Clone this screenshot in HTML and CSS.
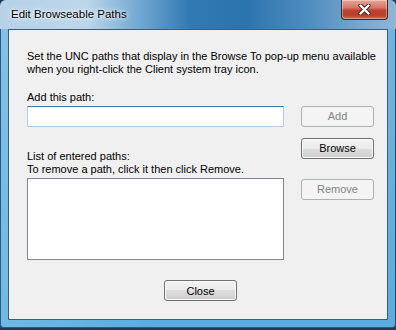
FILE: index.html
```html
<!DOCTYPE html>
<html lang="en">
<head>
  <meta charset="UTF-8" />
  <title>Edit Browseable Paths</title>
  <link rel="stylesheet" href="styles.css">
</head>
<body>
  <div class="window">
    <div class="titlebar">
      <span class="title">Edit Browseable Paths</span>
      <button class="close-x" title="Close">
        <svg width="13" height="11" viewBox="0 0 13 11">
          <path d="M2.5 1.5 L10.5 9.5 M10.5 1.5 L2.5 9.5" stroke="#3a2a2a" stroke-width="4.2" stroke-linecap="round" fill="none"/>
          <path d="M2.5 1.5 L10.5 9.5 M10.5 1.5 L2.5 9.5" stroke="#fff" stroke-width="2.4" stroke-linecap="round" fill="none"/>
        </svg>
      </button>
    </div>

    <div class="client">
      <p class="desc">Set the UNC paths that display in the Browse To pop-up menu available<br>when you right-click the Client system tray icon.</p>

      <div class="form">
        <label class="lbl-add" for="path">Add this path:</label>
        <input id="path" class="textbox" type="text" />
        <button class="btn" disabled>Add</button>
        <div class="lbl-list">List of entered paths:<br>To remove a path, click it then click Remove.</div>
        <button class="btn btn-browse">Browse</button>
        <div class="listbox"></div>
        <button class="btn btn-remove" disabled>Remove</button>
      </div>

      <div class="footer">
        <button class="btn">Close</button>
      </div>
    </div>
  </div>
</body>
</html>
```

FILE: styles.css
```css
body {
  margin: 0;
  background: #1f3a56;
  font-family: "Liberation Sans", Arial, sans-serif;
  font-size: 11px;
  color: #000;
}
.window {
  width: 396px;
  height: 328px;
  box-sizing: border-box;
  padding: 0 8px 8px 8px;
  display: flex;
  flex-direction: column;
  border-radius: 6px 6px 4px 4px;
  box-shadow: inset 1px 0 0 #2b5a80, inset -1px 0 0 #1d4a73, inset 0 -1px 0 #2b5a80;
  background:
    linear-gradient(to right, rgba(255,255,255,0.15), rgba(255,255,255,0) 40%),
    linear-gradient(to bottom, #a9cbe4 0, #6fb5e2 30px, #58addf 100%);
}
.titlebar {
  height: 29px;
  margin: 0 -8px;
  padding: 0 8px;
  display: flex;
  align-items: flex-start;
  border-radius: 6px 6px 0 0;
  background: linear-gradient(to right, #b6d2e8 0, #bcd6ea 22%, #6ea5cf 36%, #3179b3 48%, #2c74ae 62%, #4f8dc0 78%, #7ba8cf 92%, #8fb6d8 100%);
}
.title {
  padding: 8px 0 0 3px;
  font-size: 11.5px;
  line-height: 13px;
  text-shadow: 0 0 6px #fff, 0 0 3px #fff;
}
.close-x {
  margin-left: auto;
  width: 47px;
  height: 20px;
  padding: 0;
  border: 1px solid #4a2020;
  border-top: none;
  border-radius: 0 0 4px 4px;
  background: linear-gradient(to bottom, #e6a696 0, #d47866 40%, #c0402c 55%, #b8402c 80%, #cf6a4e 100%);
  box-shadow: inset 0 0 0 1px rgba(255,255,255,0.35);
  display: flex;
  align-items: center;
  justify-content: center;
}
.close-x svg {
  display: block;
}
.client {
  flex: 1;
  background: #f0f0f0;
  border: 1px solid #3f5d78;
  padding: 20px 13px 18px 18px;
}
.desc {
  margin: 0;
  line-height: 13px;
  white-space: nowrap;
}
.form {
  margin-top: 15px;
  display: grid;
  grid-template-columns: 257px 73px;
  grid-template-rows: 15px 21px 51px 82px;
  column-gap: 17px;
  line-height: 13px;
}
.lbl-add {
  grid-column: 1 / span 2;
}
.textbox {
  box-sizing: border-box;
  height: 21px;
  margin: 0;
  border: 1px solid #b5cfe7;
  border-top-color: #3d7bad;
  background: #fff;
  outline: none;
}
.lbl-list {
  align-self: end;
  margin-bottom: 2px;
  white-space: nowrap;
}
.listbox {
  box-sizing: border-box;
  border: 1px solid #828790;
  background: #fff;
}
.btn {
  box-sizing: border-box;
  width: 73px;
  height: 21px;
  padding: 0;
  font: inherit;
  color: #000;
  border: 1px solid #707070;
  border-radius: 3px;
  background: linear-gradient(to bottom, #f2f2f2 0%, #ebebeb 50%, #dddddd 50%, #cfcfcf 100%);
  box-shadow: inset 0 0 0 1px #fbfbfb;
}
.btn:disabled {
  color: #838383;
  border-color: #adb2b5;
  background: #f4f4f4;
  box-shadow: none;
}
.btn-browse {
  margin-top: 11px;
}
.btn-remove {
  margin-top: 1px;
}
.footer {
  margin-top: 20px;
  display: flex;
  justify-content: center;
}
```
